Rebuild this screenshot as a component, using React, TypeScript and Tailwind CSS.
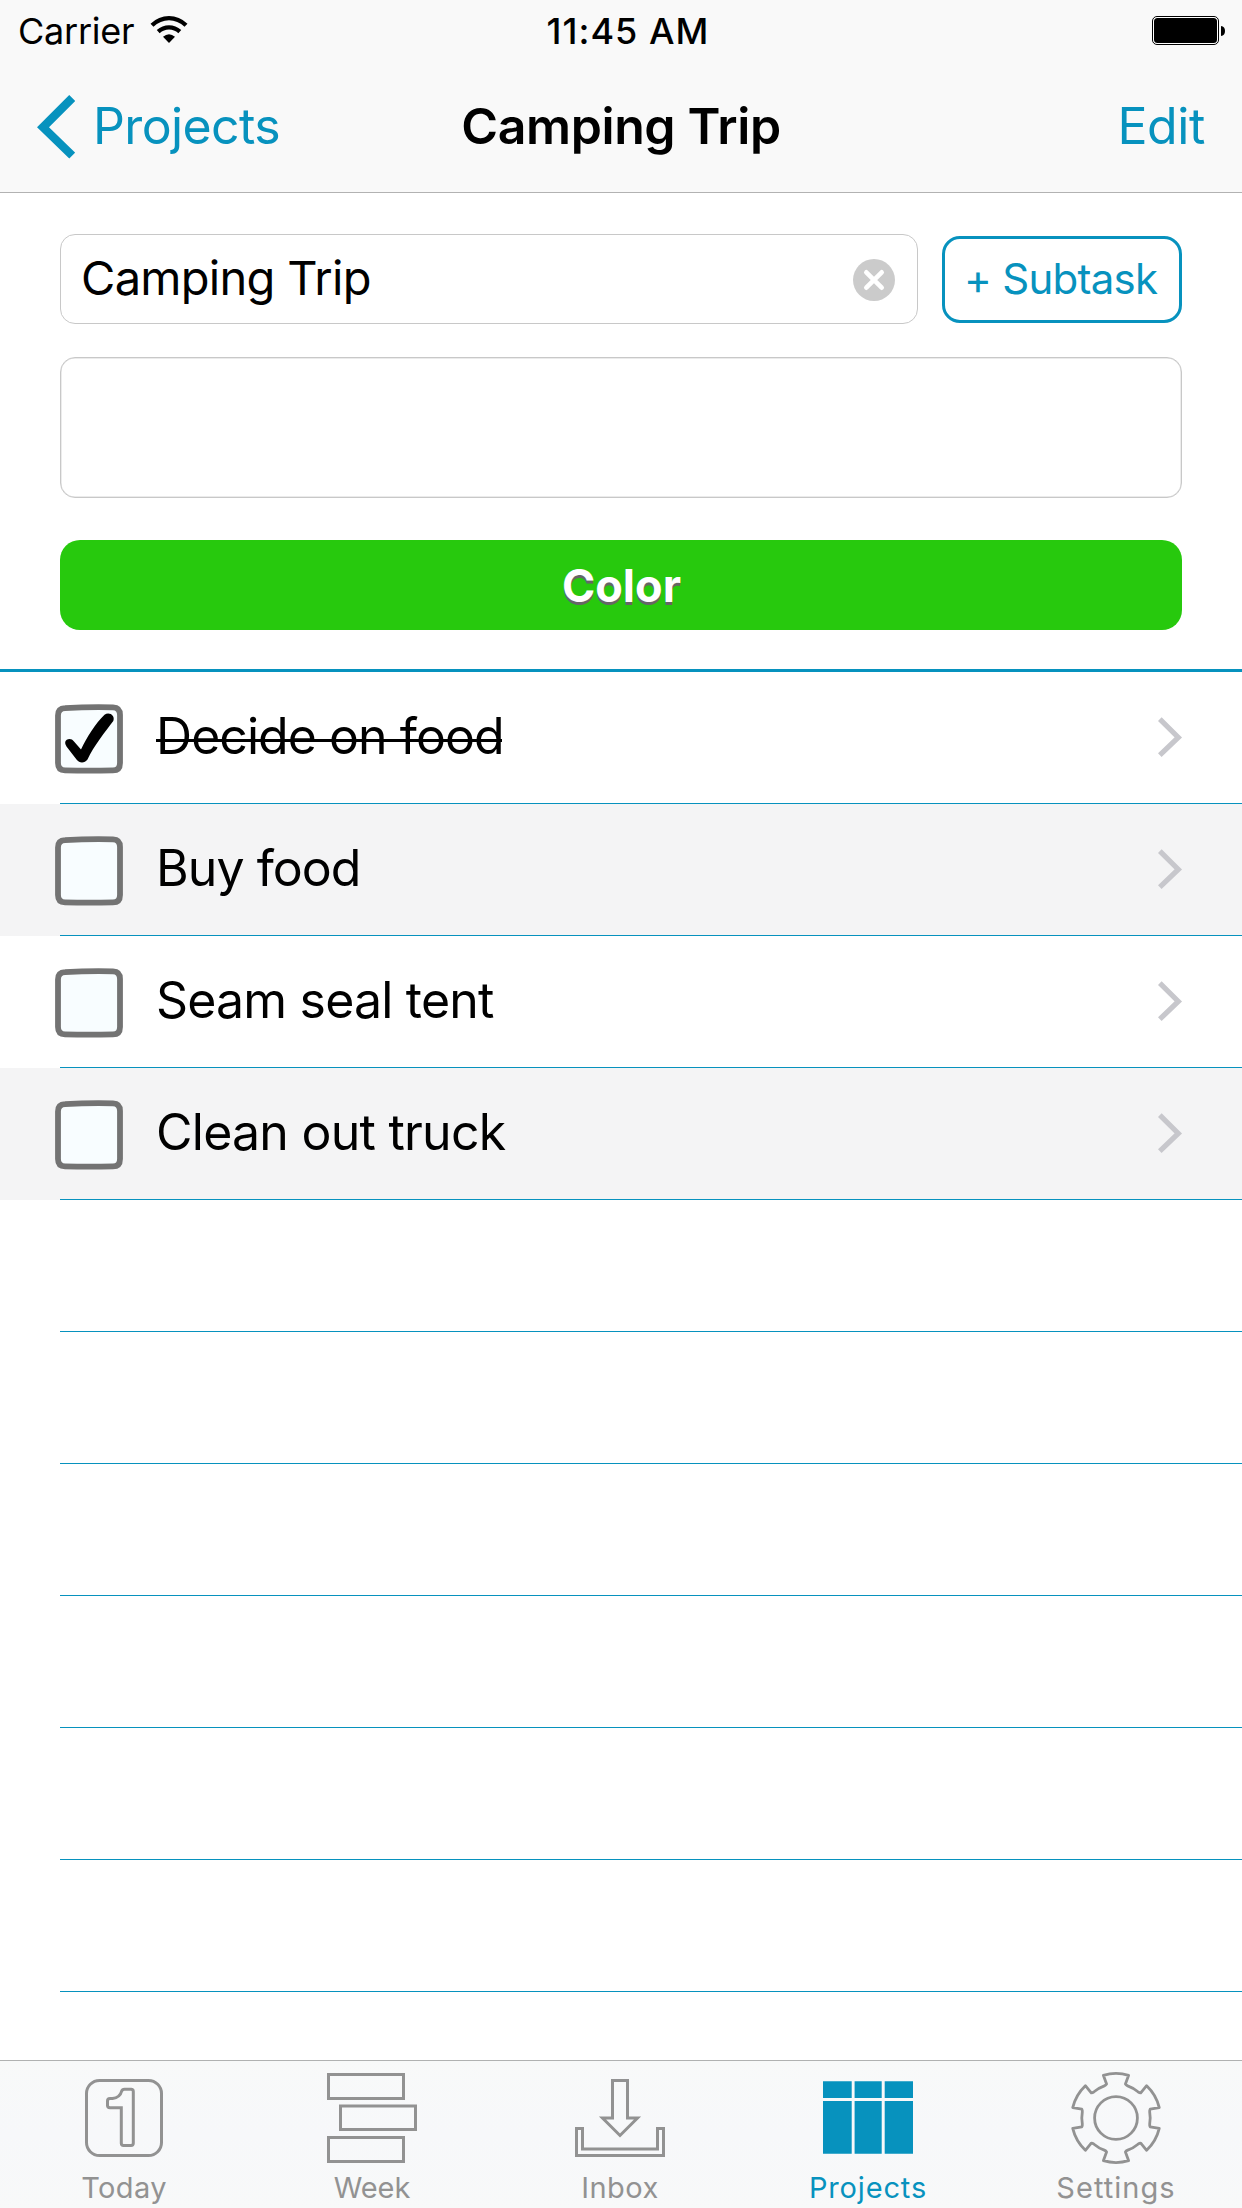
import type { ReactNode } from "react";

const tasks = [
  { title: "Decide on food", done: true, tracking: "tracking-[-0.95px]" },
  { title: "Buy food", done: false, tracking: "tracking-[-0.95px]" },
  { title: "Seam seal tent", done: false, tracking: "tracking-[-0.81px]" },
  { title: "Clean out truck", done: false, tracking: "tracking-[-0.75px]" },
];

const EMPTY_ROWS = 6;

function polar(radius: number, degrees: number) {
  const a = (degrees * Math.PI) / 180;
  return `${(46 + radius * Math.sin(a)).toFixed(2)} ${(48 - radius * Math.cos(a)).toFixed(2)}`;
}

// Six-toothed gear outline, drawn clockwise starting from the top tooth.
const gearPath =
  [0, 60, 120, 180, 240, 300]
    .map(
      (t, i) =>
        `${i === 0 ? "M" : "L"}${polar(44.5, t - 16.5)} A44.5 44.5 0 0 1 ${polar(44.5, t + 16.5)} ` +
        `L${polar(35.3, t + 15.5)} Q${polar(34.4, t + 17)} ${polar(34.2, t + 20)} ` +
        `A34.2 34.2 0 0 1 ${polar(34.2, t + 40)} Q${polar(34.4, t + 43)} ${polar(35.3, t + 44.5)}`,
    )
    .join(" ") + "Z";

function TabIcon({ children }: { children: ReactNode }) {
  return (
    <svg width="92" height="96" viewBox="0 0 92 96" fill="none" stroke="currentColor" strokeWidth="3" className="shrink-0">
      {children}
    </svg>
  );
}

const tabs = [
  {
    label: "Today",
    tracking: "tracking-[0.39px]",
    icon: (
      <TabIcon>
        <rect x="8.5" y="10.5" width="75" height="75" rx="13" />
        <path d="M32 28.5H34.5Q42 27.5 43.5 21.5Q44.3 19.3 46.5 19.3H53Q55.3 19.3 55.3 21.5V73.3Q55.3 75.5 53 75.5H45.5Q43.3 75.5 43.3 73.3V37.7H32Q29.5 37.7 29.5 35.5V31Q29.5 28.5 32 28.5Z" />
      </TabIcon>
    ),
  },
  {
    label: "Week",
    tracking: "tracking-[-0.07px]",
    icon: (
      <TabIcon>
        <rect x="2.5" y="4.5" width="75" height="24" />
        <rect x="14.5" y="36" width="75" height="23.5" />
        <rect x="2.5" y="67.5" width="75" height="24" />
      </TabIcon>
    ),
  },
  {
    label: "Inbox",
    tracking: "tracking-[0.5px]",
    icon: (
      <TabIcon>
        <path d="M2.5 58.5H8.5V79H83.5V58.5H89.5V85.5H2.5Z" />
        <path d="M38.5 10.5H53.5V48H63.5L46 65.5L28.5 48H38.5Z" />
      </TabIcon>
    ),
  },
  {
    label: "Projects",
    tracking: "tracking-[0.85px]",
    active: true,
    icon: (
      <TabIcon>
        <g fill="currentColor" stroke="none">
          <path d="M1 11.3H29.7V28H1ZM32.6 11.3H59.7V28H32.6ZM62.7 11.3H91V28H62.7Z" />
          <path d="M1 31H29.7V83.7H1ZM32.6 31H59.7V83.7H32.6ZM62.7 31H91V83.7H62.7Z" />
        </g>
      </TabIcon>
    ),
  },
  {
    label: "Settings",
    tracking: "tracking-[1.04px]",
    icon: (
      <TabIcon>
        <g strokeWidth="2.8">
          <path d={gearPath} strokeLinejoin="round" />
          <circle cx="46" cy="48" r="21.4" />
        </g>
      </TabIcon>
    ),
  },
];

function StatusBar() {
  return (
    <div className="grid h-[62px] grid-cols-[1fr_auto_1fr] items-center pl-[18px] pr-[15px] text-[36px] leading-none text-black">
      <div className="flex items-center gap-4">
        <span className="tracking-[-0.24px]">Carrier</span>
        <svg width="38" height="28" viewBox="0 0 38 28" className="-mt-[3px]">
          <path d="M2 9.3Q9.5 2.2 19 2.2T36 9.3" fill="none" stroke="#000" strokeWidth="4.3" />
          <path d="M8.2 15.6Q13 11.3 19 11.3T29.8 15.6" fill="none" stroke="#000" strokeWidth="4.3" />
          <path d="M13 20.8Q19 15.8 25 20.8L19 27Z" />
        </svg>
      </div>
      <span className="ml-[11px] font-medium tracking-[1.03px]">11:45 AM</span>
      <svg width="75" height="30" viewBox="0 0 75 30" className="justify-self-end">
        <rect x="0.5" y="0.5" width="66" height="28" rx="4.5" fill="#fff" stroke="#000" />
        <rect x="2" y="2" width="63" height="25" rx="3.5" />
        <path d="M69 10Q73 10.5 73 15T69 20Z" />
      </svg>
    </div>
  );
}

function NavBar() {
  return (
    <div className="grid h-[130px] grid-cols-[1fr_auto_1fr] items-center pb-0.5 pl-[37px] pr-[37px] text-[50px] leading-none text-[#0792be]">
      <div className="flex items-center gap-[18px]">
        <svg width="38" height="64" viewBox="0 0 38 64" fill="none" stroke="currentColor" strokeWidth="8.4" className="mt-px">
          <path d="M35.2 3L6 32.2L35.2 60.6" />
        </svg>
        <span className="tracking-[-0.61px]">Projects</span>
      </div>
      <h1 className="font-semibold tracking-[-0.39px] text-black">Camping Trip</h1>
      <span className="justify-self-end tracking-[-0.4px]">Edit</span>
    </div>
  );
}

function Checkbox({ checked }: { checked: boolean }) {
  return (
    <svg width="72" height="72" viewBox="0 0 72 72" className="shrink-0">
      <path
        d="M12 5.2Q36 3.8 60 4.4Q67 4.6 67 12V60Q67 67.4 60 67.4Q36 68 12 67.4Q5 67.2 5 60V12.5Q5 5.4 12 5.2Z"
        fill="#f8fdff"
        stroke="#737373"
        strokeWidth="5.8"
      />
      {checked && (
        <path
          d="M12.2 39C13 35.5 18.5 34.5 21 38.5L28 46.5C34 34 42.5 20.5 51.5 11.8C56 8.2 62.5 12.5 60.3 18C52.5 28.5 41 42.5 34.5 56.5C31.5 60.5 26.5 60.5 23.5 56.5L13.5 43.5Q11.8 41 12.2 39Z"
          fill="#000"
        />
      )}
    </svg>
  );
}

export default function App() {
  return (
    <div className="flex h-[2208px] w-[1242px] flex-col overflow-hidden bg-white font-['Inter',sans-serif] text-black">
      <header className="h-[193px] shrink-0 border-b border-[#b2b2b2] bg-[#f9f9f9]">
        <StatusBar />
        <NavBar />
      </header>

      <section className="flex h-[479px] shrink-0 flex-col border-b-[3px] border-[#0792be] px-[60px] pt-[41px]">
        <div className="flex h-[90px] items-center justify-between">
          <div className="flex h-[90px] w-[858px] items-center justify-between rounded-[15px] border border-[#c8c8c8] pb-[3px] pl-5 pr-[22px]">
            <span className="text-[47px] leading-none tracking-[-0.7px]">Camping Trip</span>
            <svg width="42" height="42" viewBox="0 0 42 42" className="mt-[4px]">
              <circle cx="21" cy="21" r="21" fill="#cbcbcb" />
              <path d="M13.3 13.3L28.7 28.7M28.7 13.3L13.3 28.7" stroke="#fff" strokeWidth="4.6" strokeLinecap="round" />
            </svg>
          </div>
          <button className="flex h-[87px] w-60 items-center rounded-[18px] border-[3px] border-[#0792be] pl-[19px] text-[42px] leading-none tracking-[-0.72px] whitespace-nowrap text-[#0792be]">
            + Subtask
          </button>
        </div>
        <div className="mt-[33px] h-[141px] rounded-[15px] border border-[#c8c8c8] shadow-[inset_0_0_0_0.5px_#d8d8d8]" />
        <button className="mt-[42px] flex h-[90px] items-center justify-center rounded-[20px] bg-[#27c90d] pl-px text-[45px] leading-none font-bold text-white [text-shadow:0_3px_0_#666]">
          Color
        </button>
      </section>

      <ul className="min-h-0 flex-1 overflow-hidden">
        {tasks.map((task, i) => (
          <li key={task.title} className={i % 2 ? "bg-[#f4f4f5]" : "bg-white"}>
            <div className="flex h-[131px] items-center pl-[53px] pr-[58px]">
              <div className="mt-[3px]">
                <Checkbox checked={task.done} />
              </div>
              <span className={`relative ml-[31px] -mt-[3px] text-[50px] leading-none whitespace-nowrap ${task.tracking}`}>
                {task.title}
                {task.done && <span className="absolute top-[28px] right-0.5 left-0 h-[3px] bg-black" />}
              </span>
              <svg width="26" height="42" viewBox="0 0 26 42" fill="none" stroke="#c7c7cc" strokeWidth="5.2" className="ml-auto -mt-px">
                <path d="M1.8 3.2L20.3 21.5L1.8 39.2" />
              </svg>
            </div>
            <div className="ml-[60px] h-px bg-[#0792be]" />
          </li>
        ))}
        {Array.from({ length: EMPTY_ROWS }, (_, i) => (
          <li key={i} className="ml-[60px] h-[132px] border-b border-[#0792be]" />
        ))}
      </ul>

      <nav className="grid h-[148px] shrink-0 grid-cols-5 border-t border-[#b0b1b1] bg-linear-to-b from-[#f8f9f9] via-[#f7f8fa] to-[#f8f9f9] pr-[2px]">
        {tabs.map((tab) => (
          <div
            key={tab.label}
            className={`flex flex-col items-center pt-[9px] ${tab.active ? "text-[#0792be]" : "text-[#929292]"}`}
          >
            {tab.icon}
            <span className={`mt-[1.5px] text-[29px] leading-10 ${tab.tracking}`}>{tab.label}</span>
          </div>
        ))}
      </nav>
    </div>
  );
}
